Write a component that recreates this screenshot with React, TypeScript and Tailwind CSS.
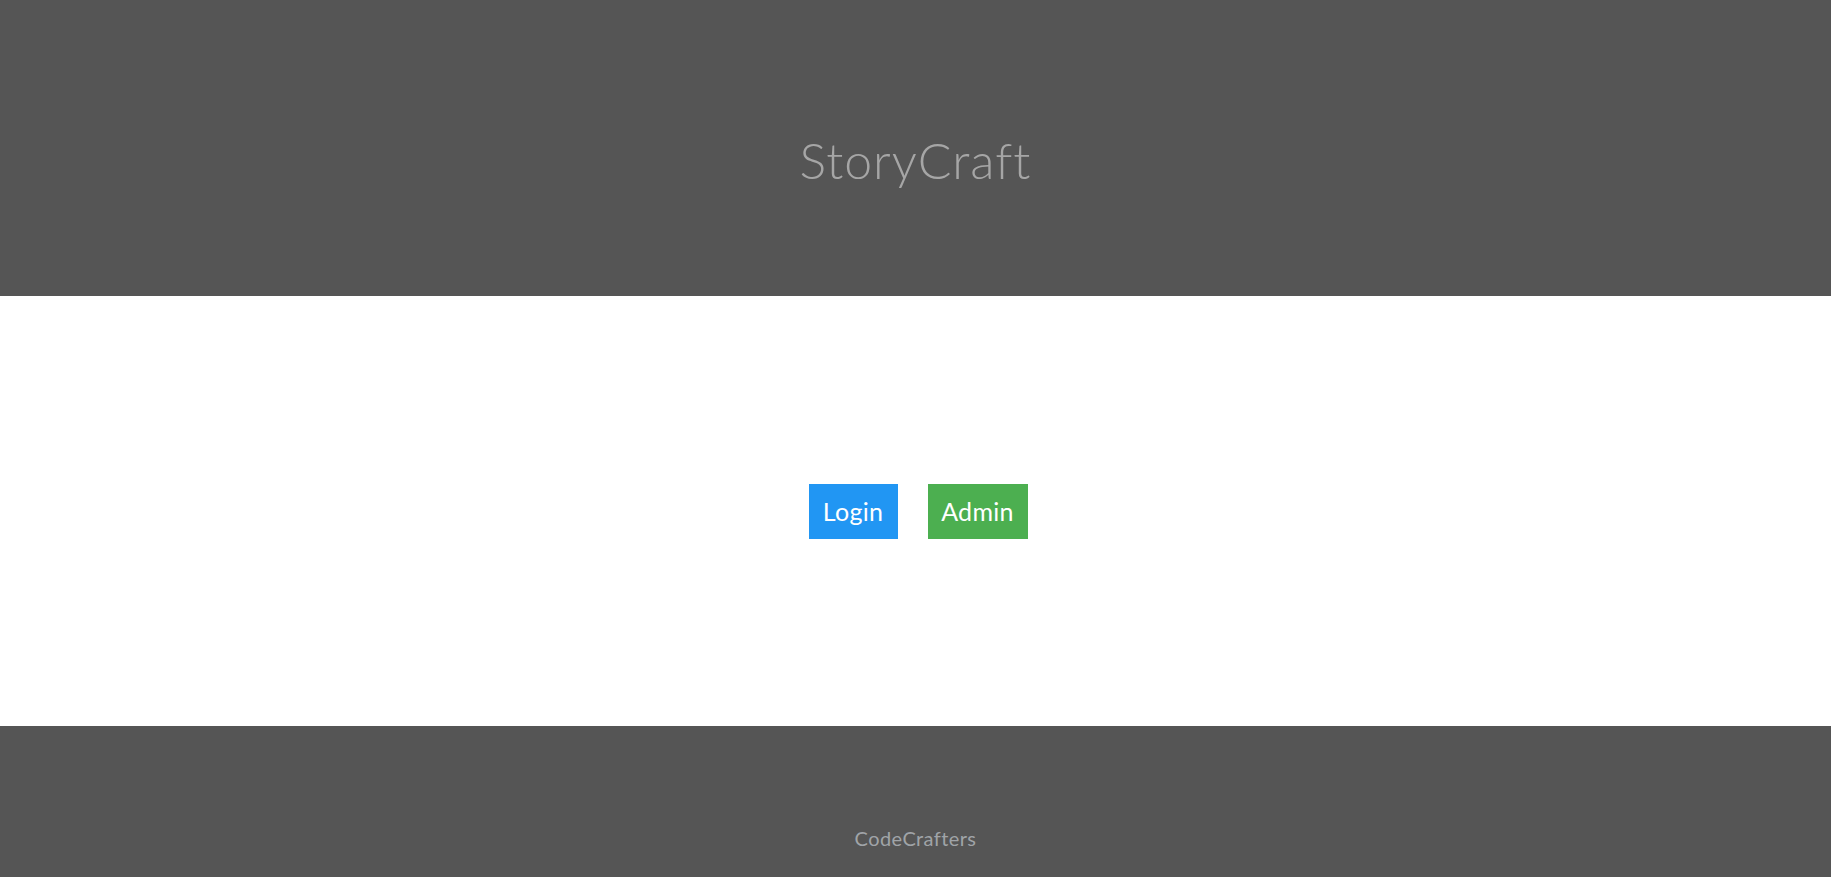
export default function App() {
  return (
    <div className="min-h-screen flex flex-col bg-white" style={{ fontFamily: "Lato, 'Open Sans', sans-serif" }}>
      {/* Header */}
      <header className="h-[296px] bg-[#555555] flex items-center justify-center pt-[24px]">
        <h1 className="text-[50px] font-light text-[#a6a6a6] tracking-[1px]">StoryCraft</h1>
      </header>

      {/* Actions */}
      <main className="h-[430px] flex items-center justify-center gap-[30px] pl-[5px]">
        <button className="h-[55px] w-[89px] bg-[#2196f3] text-white text-[25px] leading-none tracking-[0.3px]">Login</button>
        <button className="h-[55px] w-[100px] bg-[#4caf50] text-white text-[25px] leading-none tracking-[0.3px]">Admin</button>
      </main>

      {/* Footer */}
      <footer className="flex-1 bg-[#555555] flex justify-center pt-[102px]">
        <p className="text-[20px] text-[#a0a4a8] leading-none tracking-[0.4px]">CodeCrafters</p>
      </footer>
    </div>
  );
}
